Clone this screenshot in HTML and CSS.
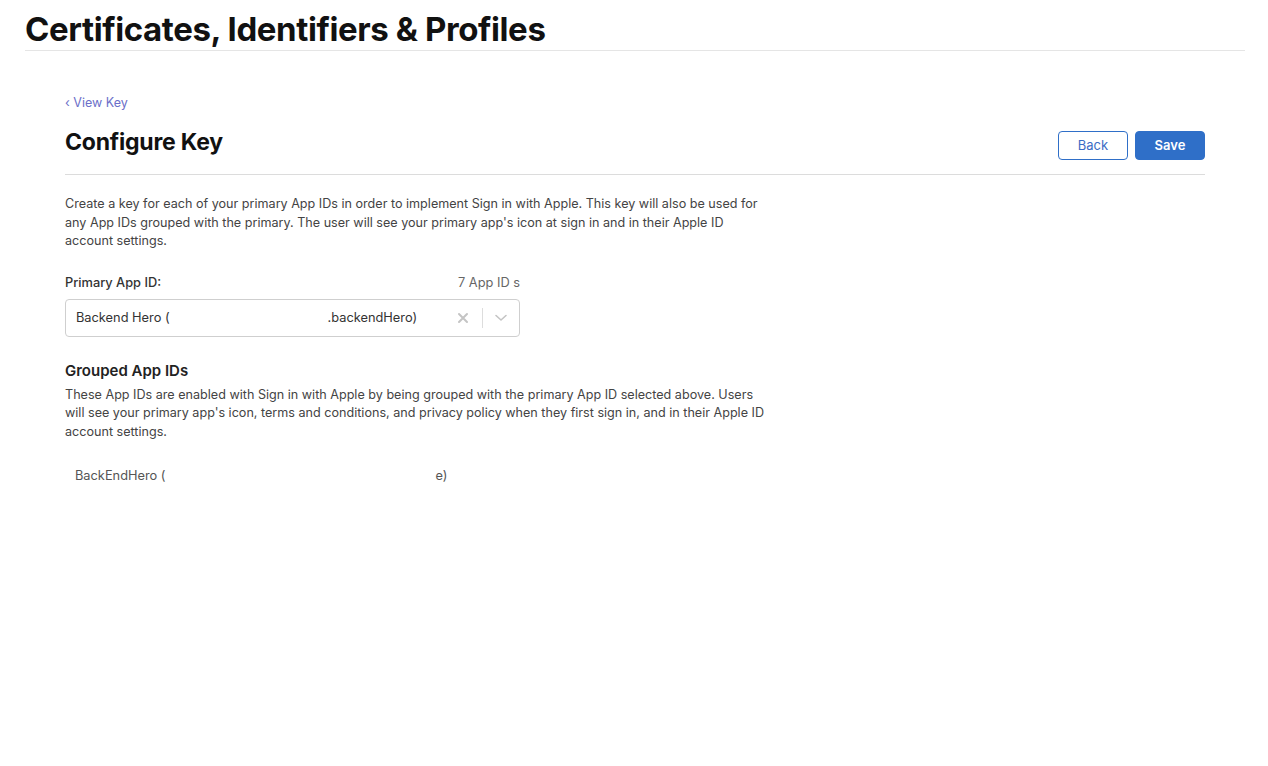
FILE: index.html
```html
<!DOCTYPE html>
<html lang="en">
<head>
    <meta charset="UTF-8"/>
    <meta name="viewport" content="width=device-width, initial-scale=1.0"/>
    <title>Configure Key</title>
    <link rel="stylesheet" href="styles.css">
</head>
<body>
<div class="page">
    <h1 class="site-title">Certificates, Identifiers &amp; Profiles</h1>
    <div class="content">
        <a class="back-link" href="#">&lsaquo; View Key</a>
        <div class="head-row">
            <h2>Configure Key</h2>
            <div class="actions">
                <button class="btn btn-outline">Back</button>
                <button class="btn btn-primary">Save</button>
            </div>
        </div>
        <p class="desc">Create a key for each of your primary App IDs in order to implement Sign in with Apple. This key will also be used for any App IDs grouped with the primary. The user will see your primary app's icon at sign in and in their Apple ID account settings.</p>

        <div class="field">
            <div class="field-head">
                <label>Primary App ID:</label>
                <span class="count">7 App ID s</span>
            </div>
            <div class="select">
                <span class="value">Backend Hero (<span class="hidden-id"></span>.backendHero)</span>
                <span class="clear">
                    <svg width="12" height="12" viewBox="0 0 12 12"><path d="M2 2 L10 10 M10 2 L2 10" stroke="#c4c4c4" stroke-width="2" stroke-linecap="round"/></svg>
                </span>
                <span class="sep"></span>
                <span class="arrow">
                    <svg width="14" height="8" viewBox="0 0 14 8"><path d="M2 1.5 L7 6 L12 1.5" fill="none" stroke="#c4c4c4" stroke-width="1.6" stroke-linecap="round" stroke-linejoin="round"/></svg>
                </span>
            </div>
        </div>

        <h3>Grouped App IDs</h3>
        <p class="desc">These App IDs are enabled with Sign in with Apple by being grouped with the primary App ID selected above. Users will see your primary app's icon, terms and conditions, and privacy policy when they first sign in, and in their Apple ID account settings.</p>
        <div class="grouped-item">BackEndHero (<span class="hidden-id2"></span>e)</div>
    </div>
</div>
</body>
</html>
```

FILE: styles.css
```css
body {
    margin: 0;
    background: #fff;
    font-family: Inter, "Noto Sans", sans-serif;
    color: #1d1d1f;
}

.page {
    padding: 0 23px 0 25px;
}

.site-title {
    margin: 0;
    padding-top: 10px;
    height: 51px;
    box-sizing: border-box;
    font-size: 33px;
    line-height: 38px;
    font-weight: 700;
    letter-spacing: -0.4px;
    color: #111;
    border-bottom: 1px solid #e5e5e5;
}

.content {
    padding: 43px 40px 0 40px;
}

.back-link {
    display: block;
    font-size: 12.5px;
    line-height: 18px;
    color: #6c6fc9;
    text-decoration: none;
}

.head-row {
    display: flex;
    justify-content: space-between;
    align-items: flex-start;
    margin-top: 15px;
    padding-bottom: 14px;
    border-bottom: 1px solid #dcdcdc;
}

.head-row h2 {
    margin: 0;
    font-size: 23px;
    line-height: 30px;
    font-weight: 700;
    letter-spacing: -0.2px;
    color: #111;
}

.actions {
    display: flex;
    gap: 7px;
    margin-top: 4px;
}

.btn {
    width: 70px;
    height: 29px;
    padding: 0 0 2px 0;
    border-radius: 4px;
    font-family: inherit;
    font-size: 13px;
    cursor: pointer;
}

.btn-outline {
    background: #fff;
    border: 1px solid #2f6fc8;
    color: #3b6cc4;
}

.btn-primary {
    background: #2f6fc8;
    border: 1px solid #2f6fc8;
    color: #fff;
    font-weight: 600;
}

.desc {
    margin: 20px 0 0 0;
    width: 706px;
    font-size: 12.6px;
    line-height: 18.5px;
    color: #444;
}

.field {
    margin-top: 23px;
    width: 455px;
}

.field-head {
    display: flex;
    justify-content: space-between;
    align-items: center;
    height: 18px;
}

.field-head label {
    font-size: 12.8px;
    line-height: 18px;
    font-weight: 500;
    color: #333;
}

.count {
    font-size: 12.8px;
    line-height: 18px;
    color: #666;
}

.select {
    display: flex;
    align-items: center;
    margin-top: 7px;
    height: 38px;
    box-sizing: border-box;
    border: 1px solid #cfcfcf;
    border-radius: 4px;
    padding-left: 10px;
}

.value {
    flex: 1;
    font-size: 12.8px;
    color: #333;
}

.hidden-id {
    display: inline-block;
    width: 158px;
}

.clear {
    display: flex;
    width: 14px;
    justify-content: center;
    margin-right: 12px;
}

.sep {
    width: 1px;
    height: 20px;
    background: #ddd;
}

.arrow {
    display: flex;
    width: 36px;
    justify-content: center;
}

h3 {
    margin: 24px 0 0 0;
    font-size: 15px;
    line-height: 20px;
    font-weight: 600;
    color: #222;
}

h3 + .desc {
    margin-top: 5px;
}

.grouped-item {
    margin-top: 27px;
    padding-left: 10px;
    font-size: 12.8px;
    color: #555;
}

.hidden-id2 {
    display: inline-block;
    width: 270px;
}
```
